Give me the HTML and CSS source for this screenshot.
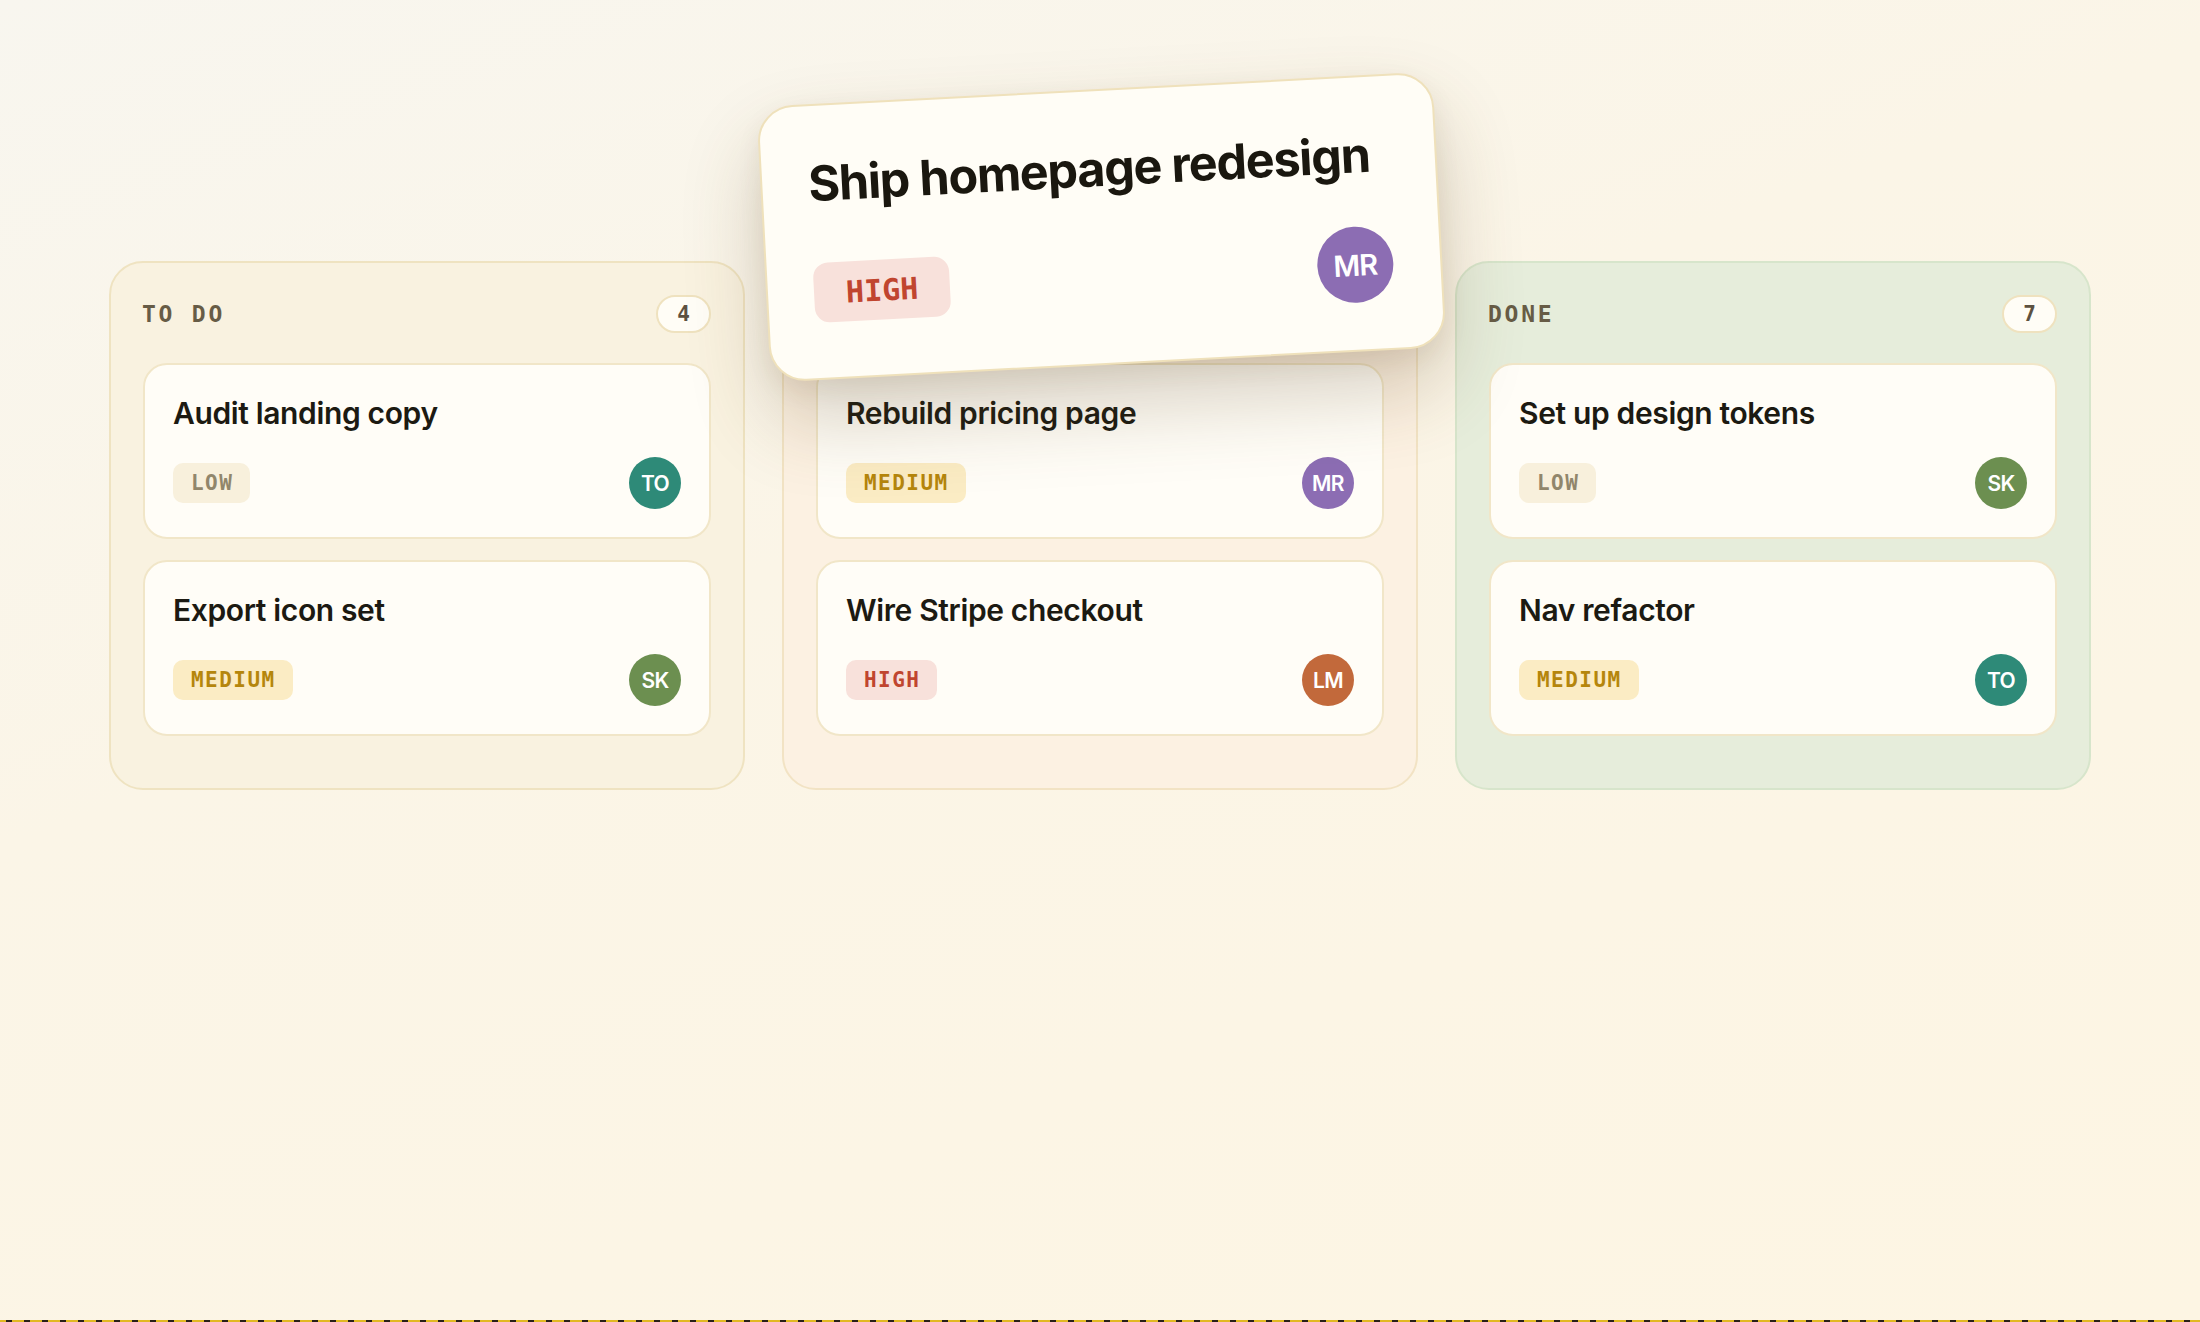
FILE: index.html
```html
<!DOCTYPE html>
<html lang="en">
<head>
<meta charset="utf-8">
<title>Board</title>
<link rel="stylesheet" href="styles.css">
</head>
<body>
<div class="page">
  <main class="board">
    <section class="column column-todo">
      <header class="col-head">
        <span class="col-title">TO DO</span>
        <span class="col-count">4</span>
      </header>
      <div class="col-cards">
        <article class="card">
          <h3 class="card-title">Audit landing copy</h3>
          <div class="card-meta">
            <span class="tag tag-low">LOW</span>
            <span class="avatar av-teal">TO</span>
          </div>
        </article>
        <article class="card">
          <h3 class="card-title">Export icon set</h3>
          <div class="card-meta">
            <span class="tag tag-medium">MEDIUM</span>
            <span class="avatar av-green">SK</span>
          </div>
        </article>
      </div>
    </section>

    <section class="column column-doing">
      <header class="col-head">
        <span class="col-title">IN PROGRESS</span>
        <span class="col-count">3</span>
      </header>
      <div class="col-cards">
        <article class="card">
          <h3 class="card-title">Rebuild pricing page</h3>
          <div class="card-meta">
            <span class="tag tag-medium">MEDIUM</span>
            <span class="avatar av-purple">MR</span>
          </div>
        </article>
        <article class="card">
          <h3 class="card-title">Wire Stripe checkout</h3>
          <div class="card-meta">
            <span class="tag tag-high">HIGH</span>
            <span class="avatar av-orange">LM</span>
          </div>
        </article>
      </div>
    </section>

    <section class="column column-done">
      <header class="col-head">
        <span class="col-title">DONE</span>
        <span class="col-count">7</span>
      </header>
      <div class="col-cards">
        <article class="card">
          <h3 class="card-title">Set up design tokens</h3>
          <div class="card-meta">
            <span class="tag tag-low">LOW</span>
            <span class="avatar av-green">SK</span>
          </div>
        </article>
        <article class="card">
          <h3 class="card-title">Nav refactor</h3>
          <div class="card-meta">
            <span class="tag tag-medium">MEDIUM</span>
            <span class="avatar av-teal">TO</span>
          </div>
        </article>
      </div>
    </section>

    <article class="card drag-card">
      <h3 class="drag-title">Ship homepage redesign</h3>
      <div class="card-meta">
        <span class="tag tag-high drag-tag">HIGH</span>
        <span class="avatar av-purple drag-avatar">MR</span>
      </div>
    </article>
  </main>
  <div class="dash-line"></div>
</div>
</body>
</html>
```

FILE: styles.css
```css
* { box-sizing: border-box; }

html, body {
  margin: 0;
  padding: 0;
}

body {
  font-family: Inter, "Noto Sans", sans-serif;
  color: #1c1a12;
  background: linear-gradient(160deg, #f8f6ef 0%, #fbf5e7 40%, #fdf5e3 100%);
  min-height: 1322px;
}

.page {
  height: 1322px;
  display: flex;
  flex-direction: column;
}

.board {
  position: relative;
  display: grid;
  grid-template-columns: repeat(3, 636px);
  column-gap: 37px;
  justify-content: center;
  align-items: start;
  padding-top: 261px;
}

.column {
  border: 2px solid #efe3c1;
  border-radius: 34px;
  padding: 32px 32px 52px 32px;
  background: #f9f2e0;
}

.column-doing {
  background: #fcf1e2;
  border-color: #f2e3c4;
}

.column-done {
  background: #e6eddb;
  border-color: #d7e5cb;
}

.col-head {
  display: flex;
  align-items: center;
  justify-content: space-between;
  height: 38px;
  margin-bottom: 30px;
}

.col-title {
  font-family: "DejaVu Sans Mono", "Liberation Mono", monospace;
  font-weight: 700;
  font-size: 23px;
  letter-spacing: 0.12em;
  color: #675c46;
  margin-left: -1px;
}

.col-count {
  display: flex;
  align-items: center;
  justify-content: center;
  min-width: 55px;
  height: 38px;
  padding: 0 14px;
  border-radius: 19px;
  border: 2px solid #efe2bf;
  background: #fffdf6;
  font-family: "DejaVu Sans Mono", "Liberation Mono", monospace;
  font-weight: 700;
  font-size: 21px;
  color: #5d5140;
}

.col-cards {
  display: flex;
  flex-direction: column;
  gap: 21px;
}

.card {
  background: #fffdf7;
  border: 2px solid #f1e6c8;
  border-radius: 24px;
  padding: 30px 28px 28px 28px;
  display: flex;
  flex-direction: column;
  gap: 26px;
}

.card-title {
  margin: 0;
  font-family: Inter, "Noto Sans", sans-serif;
  font-weight: 600;
  font-size: 30px;
  line-height: 36px;
  letter-spacing: -0.012em;
  color: #1c1a12;
}

.card-meta {
  display: flex;
  align-items: center;
  justify-content: space-between;
}

.tag {
  display: inline-flex;
  align-items: center;
  height: 40px;
  padding: 0 17px 0 18px;
  border-radius: 10px;
  font-family: "DejaVu Sans Mono", "Liberation Mono", monospace;
  font-weight: 700;
  font-size: 21px;
  letter-spacing: 0.07em;
}

.tag-low { background: #f8f0dc; color: #91866b; }
.tag-medium { background: #fbecc4; color: #b5860c; }
.tag-high { background: #f8e1db; color: #c0452f; }

.avatar {
  width: 52px;
  height: 52px;
  border-radius: 50%;
  display: flex;
  align-items: center;
  justify-content: center;
  color: #ffffff;
  font-family: Inter, "Noto Sans", sans-serif;
  font-weight: 600;
  font-size: 21px;
  letter-spacing: -0.03em;
}

.av-teal { background: #2e8a78; }
.av-green { background: #6c8f50; }
.av-purple { background: #8c6db3; }
.av-orange { background: #c2693b; }

/* dragged card floating above the board */
.drag-card {
  position: absolute;
  left: 763px;
  top: 89px;
  width: 677px;
  height: 276px;
  padding: 50px 47px 41px 46px;
  border-radius: 36px;
  border: 2px solid #efe1bb;
  background: #fffdf6;
  gap: 43px;
  transform: rotate(-3deg);
  box-shadow: 0 40px 80px rgba(90, 68, 28, 0.24), 0 10px 24px rgba(90, 68, 28, 0.08);
  z-index: 5;
}

.drag-title {
  margin: 0;
  font-family: Inter, "Noto Sans", sans-serif;
  font-weight: 700;
  font-size: 48.5px;
  line-height: 56px;
  letter-spacing: -0.025em;
  color: #1a170f;
}

.drag-tag {
  height: 60px;
  padding: 0 32px;
  border-radius: 15px;
  font-size: 30px;
  letter-spacing: 0;
}

.drag-avatar {
  width: 76px;
  height: 76px;
  font-size: 29px;
}

.dash-line {
  margin-top: auto;
  height: 2px;
  background: repeating-linear-gradient(90deg, #e1b822 0 12px, #2a2118 12px 18px);
  background-position: -6px 0;
}
```
